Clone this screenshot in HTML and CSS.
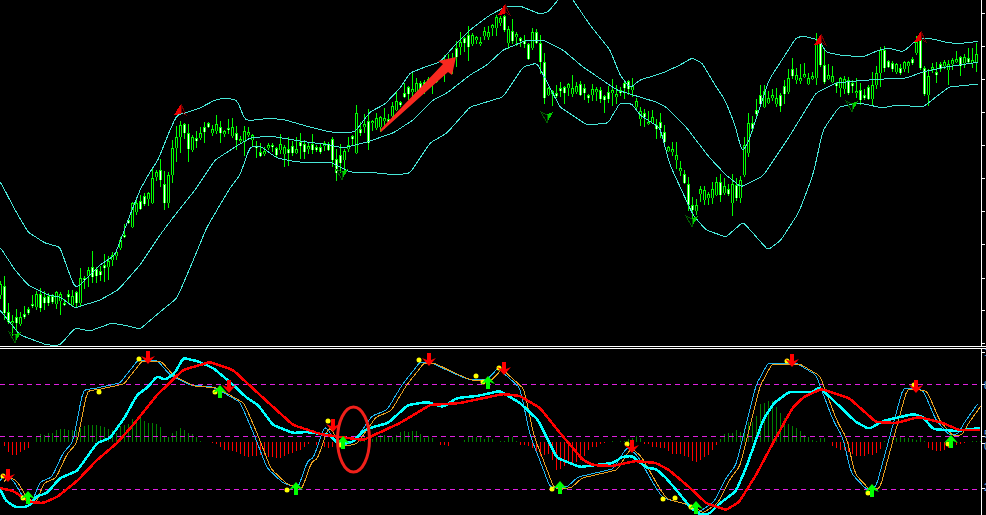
FILE: index.html
```html
<!DOCTYPE html>
<html lang="en">
<head>
<meta charset="utf-8">
<title>Chart</title>
<link rel="stylesheet" href="styles.css">
</head>
<body>
<svg id="chart" class="chart" viewBox="0 0 986 515" width="986" height="515" xmlns="http://www.w3.org/2000/svg">
  <g id="candles"></g>
  <g id="bands"></g>
  <g id="markers-top"></g>
  <g id="histogram"></g>
  <g class="levels">
    <line x1="0" x2="981" y1="384.5" y2="384.5"/>
    <line x1="0" x2="981" y1="436.5" y2="436.5"/>
    <line x1="0" x2="981" y1="489.5" y2="489.5"/>
  </g>
  <g id="oscillator"></g>
  <g id="markers-bottom"></g>
  <ellipse class="ring" cx="353.5" cy="439.5" rx="16" ry="32.5"/>
  <polygon class="pointer" points="380,130 443,64 438,61 456,57 452,75 448,72 381,132"/>
  <g class="frame">
    <rect x="0" y="346" width="986" height="1"/>
    <rect x="0" y="348" width="986" height="1"/>
    <rect x="981" y="0" width="1" height="346"/>
    <rect x="981" y="349" width="1" height="166"/>
  </g>
  <g id="ticks" class="frame"></g>
  <g class="scale">
    <text x="984" y="356">1</text>
    <text x="984" y="389">8</text>
    <text x="984" y="438">5</text>
    <text x="984" y="450">0</text>
    <text x="984" y="491">2</text>
  </g>
</svg>
<script src="app.js"></script>
</body>
</html>
```
FILE: styles.css
```css
html, body {
  margin: 0;
  padding: 0;
  background: #000;
  overflow: hidden;
}
.chart {
  display: block;
  background: #000;
  shape-rendering: crispEdges;
}
.wick, .body-hollow { fill: #00ff00; }
.hole { fill: #000; }
.hole-white { fill: #fff; }
.band { fill: none; stroke: #48e8d8; stroke-width: 1; }
.levels line { stroke: #e020e0; stroke-width: 1; stroke-dasharray: 5 4; }
.hist-up { fill: #008000; }
.hist-down { fill: #ff0000; }
.thin-blue { fill: none; stroke: #1eb4f0; stroke-width: 1; }
.thin-orange { fill: none; stroke: #e8a020; stroke-width: 1; }
.thick-cyan { fill: none; stroke: #00ffff; stroke-width: 2.5; }
.thick-red { fill: none; stroke: #ff0000; stroke-width: 2.5; }
.dot { fill: #ffff00; shape-rendering: auto; }
.arrow-up { fill: #00ff00; shape-rendering: auto; }
.arrow-down { fill: #ff0000; shape-rendering: auto; }
.flag-red { fill: #e80000; }
.flag-red-edge { fill: none; stroke: #700000; stroke-width: 1; }
.flag-green { fill: #00d000; }
.flag-green-edge { fill: none; stroke: #006000; stroke-width: 1; }
.ring { fill: none; stroke: #f0201a; stroke-width: 3; shape-rendering: auto; }
.pointer { fill: #f8281f; shape-rendering: auto; }
.frame rect { fill: #fff; }
.scale text { fill: #6fb0e8; font: 11px "Liberation Sans", sans-serif; shape-rendering: auto; }
```
FILE: app.js
```js
const NS = 'http://www.w3.org/2000/svg';
function el(parent, tag, attrs) {
  const e = document.createElementNS(NS, tag);
  for (const k in attrs) e.setAttribute(k, attrs[k]);
  document.getElementById(parent).appendChild(e);
  return e;
}
function rect(parent, x, y, w, h, cls) {
  el(parent, 'rect', { x, y, width: w, height: Math.max(h, 1), class: cls });
}
function interp(pts, x) {
  if (x <= pts[0][0]) return pts[0][1];
  for (let i = 1; i < pts.length; i++) {
    if (x <= pts[i][0]) {
      const a = pts[i - 1], b = pts[i];
      return a[1] + (b[1] - a[1]) * (x - a[0]) / (b[0] - a[0]);
    }
  }
  return pts[pts.length - 1][1];
}
function curve(pts, step, dx, dy) {
  const start = pts[0][0], end = pts[pts.length - 1][0];
  const out = [];
  for (let x = start; x <= end; x += step) {
    const y = (interp(pts, x - step) + 2 * interp(pts, x) + interp(pts, x + step)) / 4;
    out.push((x + (dx || 0)).toFixed(1) + ',' + (y + (dy || 0)).toFixed(1));
  }
  return out.join(' ');
}

/* price path */
const price = [[0,290],[5,312],[12,320],[16,322],[25,316],[35,302],[45,298],[55,298],[65,300],[75,300],[80,288],[90,272],[100,273],[108,265],[115,255],[122,240],[130,213],[140,203],[150,195],[157,175],[165,172],[170,145],[176,140],[180,130],[184,130],[190,140],[200,133],[210,127],[220,130],[230,132],[240,136],[250,136],[260,150],[270,151],[280,150],[290,150],[300,148],[310,148],[320,147],[330,150],[337,165],[345,152],[355,130],[365,125],[372,125],[380,122],[390,115],[400,100],[410,90],[420,85],[430,85],[440,75],[450,60],[460,46],[470,40],[480,40],[490,30],[500,18],[505,22],[510,35],[520,37],[530,45],[537,40],[543,85],[550,92],[560,90],[570,90],[580,90],[590,93],[600,95],[610,97],[620,90],[630,85],[637,110],[645,120],[660,125],[668,150],[680,165],[690,198],[700,195],[710,195],[720,190],[730,195],[738,190],[745,140],[752,125],[760,100],[770,98],[780,100],[790,78],[800,75],[810,85],[820,55],[825,75],[835,82],[850,85],[860,95],[870,90],[880,62],[890,65],[900,70],[910,62],[917,48],[925,80],[930,75],[940,65],[950,65],[960,62],[970,58],[980,56]];

/* [x, top, bottom, white] */
const big = [[4,286,313,1],[8,312,322,1],[36,294,307,0],[40,294,308,1],[56,292,304,0],[80,278,303,0],[132,203,227,0],[152,178,203,0],[164,184,203,1],[168,175,203,0],[172,148,175,0],[160,170,180,1],[176,137,148,0],[180,125,137,0],[184,124,133,1],[188,133,149,1],[192,137,150,0],[332,139,160,1],[336,159,173,1],[356,113,153,0],[368,121,143,1],[380,117,127,0],[504,16,30,1],[508,29,43,0],[528,44,59,1],[532,32,48,0],[536,32,43,1],[540,43,62,1],[544,62,98,1],[688,184,205,1],[692,205,210,1],[696,205,211,0],[716,182,195,0],[720,182,195,1],[732,184,203,0],[736,185,198,1],[740,180,198,0],[744,145,175,0],[748,123,153,0],[764,91,107,0],[788,78,92,0],[792,69,76,1],[816,43,78,0],[820,43,65,1],[824,65,82,1],[848,80,93,1],[868,87,99,1],[872,85,99,0],[876,73,85,0],[880,50,73,0],[884,50,68,1],[916,42,53,0],[920,40,68,1],[924,68,94,1],[928,76,95,0]];
const bigMap = {};
big.forEach(b => { bigMap[b[0]] = b; });

let seed = 7;
function rnd() {
  seed = (seed * 16807) % 2147483647;
  return seed / 2147483647;
}
for (let x = 0; x <= 976; x += 4) {
  const c = interp(price, x);
  let top, bot, white;
  if (bigMap[x]) {
    top = bigMap[x][1]; bot = bigMap[x][2]; white = bigMap[x][3];
  } else {
    const a = c + (rnd() - 0.5) * 10, b = c + (rnd() - 0.5) * 10;
    top = Math.round(Math.min(a, b) - 1);
    bot = Math.round(Math.max(a, b) + 1);
    white = rnd() > 0.5 ? 1 : 0;
  }
  const hi = Math.round(top - 1 - rnd() * rnd() * 16);
  const lo = Math.round(bot + 1 + rnd() * rnd() * 16);
  rect('candles', x, hi, 1, lo - hi, 'wick');
  rect('candles', x - 1, top, 3, bot - top, 'body-hollow');
  if (bot - top > 1) rect('candles', x, top + 1, 1, bot - top - 1, white ? 'hole-white' : 'hole');
}

/* Bollinger bands */
const upper = [[0,181],[15,210],[28,232],[45,243],[60,247],[68,270],[75,288],[80,285],[100,265],[115,255],[130,215],[140,190],[150,172],[158,160],[170,130],[177,115],[185,113],[200,108],[215,100],[225,98],[237,100],[245,120],[255,120],[270,118],[285,120],[310,127],[330,132],[355,132],[370,112],[385,104],[400,88],[410,73],[425,67],[440,62],[455,45],[470,30],[490,15],[505,7],[520,6],[530,10],[540,14],[548,12],[558,0],[566,-8],[573,0],[590,25],[610,50],[620,75],[630,88],[640,80],[656,75],[665,72],[680,65],[692,58],[702,63],[715,85],[725,100],[735,125],[742,152],[748,143],[769,80],[796,38],[803,36],[819,40],[826,52],[839,55],[863,57],[879,50],[889,48],[903,52],[919,38],[933,39],[949,43],[966,43],[979,41]];
const middle = [[0,247],[15,270],[28,285],[48,295],[60,297],[75,308],[100,300],[118,290],[140,265],[160,235],[175,215],[195,190],[215,160],[235,147],[250,138],[270,136],[300,141],[330,145],[343,148],[367,142],[393,133],[413,120],[433,100],[447,93],[470,75],[487,65],[503,50],[527,40],[543,40],[563,50],[583,67],[617,90],[656,102],[666,107],[686,127],[709,157],[726,175],[741,187],[763,176],[789,137],[816,93],[836,83],[856,81],[869,80],[883,79],[906,78],[923,72],[946,67],[979,62]];
const lower = [[0,310],[20,335],[47,345],[60,345],[75,328],[90,331],[112,323],[128,326],[140,329],[160,312],[177,298],[190,268],[207,227],[230,188],[240,175],[250,147],[260,146],[277,158],[297,162],[330,162],[350,172],[367,172],[397,175],[410,173],[430,143],[447,133],[470,107],[503,97],[523,67],[537,63],[560,107],[587,125],[608,123],[620,103],[632,104],[640,115],[660,128],[670,165],[693,215],[706,230],[726,237],[743,222],[768,250],[781,240],[799,212],[813,175],[823,130],[839,107],[859,103],[883,108],[896,105],[923,107],[949,87],[979,84]];
[upper, middle, lower].forEach(b => el('bands', 'polyline', { points: curve(b, 2), class: 'band' }));

/* signal flags on the price panel */
function flagUp(x, y) {
  el('markers-top', 'polygon', { points: `${x + 1},${y} ${x + 1},${y + 10} ${x - 6},${y + 11}`, class: 'flag-red' });
  el('markers-top', 'polygon', { points: `${x + 1},${y} ${x + 6},${y + 11} ${x + 1},${y + 8}`, class: 'flag-red-edge' });
}
function flagDown(x, y) {
  el('markers-top', 'polygon', { points: `${x},${y + 10} ${x},${y + 1} ${x + 6},${y - 1}`, class: 'flag-green' });
  el('markers-top', 'polygon', { points: `${x},${y + 10} ${x - 6},${y - 1} ${x},${y + 2}`, class: 'flag-green-edge' });
}
[[180,104],[504,4],[820,34],[920,31]].forEach(p => flagUp(p[0], p[1]));
[[15,333],[547,113],[852,102],[692,217],[342,170]].forEach(p => flagDown(p[0], p[1]));

/* histogram: [start x, values]; positive green, negative red */
const hist = [
  [4, [-4,-10,-13,-13,-10,-8,-6,0,5,8,7,9,9,12,13,13,12,12,12,14,16,17,17,17,16,15,13,12,9,16,17,18,23,23,25,21,19,19,18,15,6,5,9,11,14,12,9,8,5,1,0,0,-1,-2,-5,-8,-8,-9,-10,-12,-14,-15,-14,-14,-13,-13,-15,-15,-16,-16,-14,-12,-11,-9,-8,-5,-2,0,-3,0,-5,-6,-5]],
  [360, [4,6,10,3,5,7,7,6,5,7,10,11,10,11,11,8,4,6,4,0,-3,-3,-4,0,0,0,2,5,5,5,5,3,5,3,0,1,1,5,5,1,-3,-3,-4,-6,-10,-14,-13,-12,-18,-28,-27,-24,-22,-22,-20,-18,-14,-8,-5,-5,-2,-1,0,1,0,1,1,3,4,6,4,-2,-2,-5,-5,-6,-6,-6]],
  [668, [-9,-12,-12,-12,-14,-15,-19,-20,-18,-15,-13,-8,-3,3,8,9,9,12,10,14,20,20,26,38,39,41,41,35,29,24,18,16,14,11,7,5,2,1,4,4,0,-4,-6,-8,-8,-10,-12,-14,-14,-14,-12,-13,-11,-7,1,2,4,4,5,4,4,3,2,5,1,-6,-8,-9,-9,-8,-6,-5,-3,-2,-1,0,1,1,1]]
];
hist.forEach(h => {
  h[1].forEach((v, i) => {
    if (!v) return;
    const x = h[0] + i * 4;
    if (v > 0) rect('histogram', x, 442 - v, 1, v, 'hist-up');
    else rect('histogram', x, 442, 1, -v, 'hist-down');
  });
});

/* oscillator lines */
const blue = [[0,482],[3,475],[13,480],[23,497],[32,502],[40,482],[52,477],[63,453],[73,442],[83,390],[97,388],[120,383],[138,360],[157,360],[170,375],[190,385],[213,387],[240,402],[253,432],[267,468],[283,483],[298,488],[308,460],[313,459],[325,425],[330,433],[340,445],[353,443],[372,416],[387,410],[402,385],[420,362],[430,362],[453,373],[467,379],[487,380],[498,368],[520,388],[530,435],[550,487],[567,487],[578,477],[613,469],[627,447],[637,455],[656,488],[663,498],[689,505],[699,512],[714,502],[726,478],[736,465],[756,385],[768,363],[796,363],[816,375],[833,420],[843,438],[851,473],[866,489],[876,487],[903,388],[909,388],[923,390],[936,420],[949,435],[958,434],[964,423],[979,402]];
const cyan = [[0,488],[5,500],[15,507],[25,507],[32,504],[35,497],[47,493],[60,478],[77,471],[97,443],[110,438],[125,417],[137,395],[148,387],[157,376],[165,380],[175,373],[183,358],[197,361],[213,368],[230,382],[247,398],[258,405],[273,425],[293,433],[307,432],[330,435],[337,443],[353,442],[363,431],[373,427],[388,423],[408,405],[427,402],[443,407],[457,398],[477,396],[500,391],[520,403],[538,420],[557,458],[580,467],[613,463],[622,457],[632,456],[647,468],[656,469],[666,478],[678,492],[691,508],[699,514],[709,514],[718,505],[736,491],[746,468],[763,420],[774,403],[789,392],[813,392],[819,387],[833,400],[856,422],[869,429],[883,421],[913,414],[923,417],[933,429],[956,431],[981,428]];
const red = [[0,488],[13,491],[30,502],[43,503],[57,497],[77,481],[97,460],[117,443],[133,425],[157,395],[183,370],[210,362],[233,370],[260,395],[293,425],[320,434],[340,437],[363,440],[372,436],[400,423],[430,405],[460,403],[503,394],[520,396],[540,408],[560,433],[583,460],[593,465],[613,466],[635,461],[656,463],[669,470],[689,487],[706,503],[726,510],[739,502],[756,475],[773,443],[793,407],[804,397],[821,389],[849,398],[876,422],[896,423],[919,417],[943,423],[959,430],[981,430]];
el('oscillator', 'polyline', { points: curve(blue, 2), class: 'thin-blue' });
el('oscillator', 'polyline', { points: curve(blue, 2, 4, 1), class: 'thin-orange' });
el('oscillator', 'polyline', { points: curve(cyan, 2), class: 'thick-cyan' });
el('oscillator', 'polyline', { points: curve(red, 2), class: 'thick-red' });

/* dots */
[[3,476],[23,498],[99,392],[139,359],[215,392],[328,421],[287,490],[340,445],[419,360],[476,376],[483,382],[499,368],[552,489],[627,444],[663,499],[675,498],[691,507],[787,361],[868,493],[914,385],[948,444]].forEach(p => {
  el('markers-bottom', 'circle', { cx: p[0], cy: p[1], r: 2.5, class: 'dot' });
});

/* arrows */
function upArrow(x, y) {
  const p = [[x,y],[x+7,y+8],[x+2,y+6],[x+2,y+13],[x-2,y+13],[x-2,y+6],[x-7,y+8]];
  el('markers-bottom', 'polygon', { points: p.join(' '), class: 'arrow-up' });
}
function downArrow(x, y) {
  const p = [[x,y+13],[x+7,y+5],[x+2,y+7],[x+2,y],[x-2,y],[x-2,y+7],[x-7,y+5]];
  el('markers-bottom', 'polygon', { points: p.join(' '), class: 'arrow-down' });
}
[[28,491],[220,385],[296,482],[343,436],[488,376],[560,481],[696,501],[872,484],[951,435]].forEach(p => upArrow(p[0], p[1]));
[[8,469],[148,351],[229,380],[333,419],[429,353],[504,362],[632,440],[792,354],[916,380]].forEach(p => downArrow(p[0], p[1]));

/* axis ticks */
for (const y of [13,46,79,112,145,178,211,244,278,310,343,352,384,436,443,488]) {
  rect('ticks', 982, y, 3, 1, '');
}
```
